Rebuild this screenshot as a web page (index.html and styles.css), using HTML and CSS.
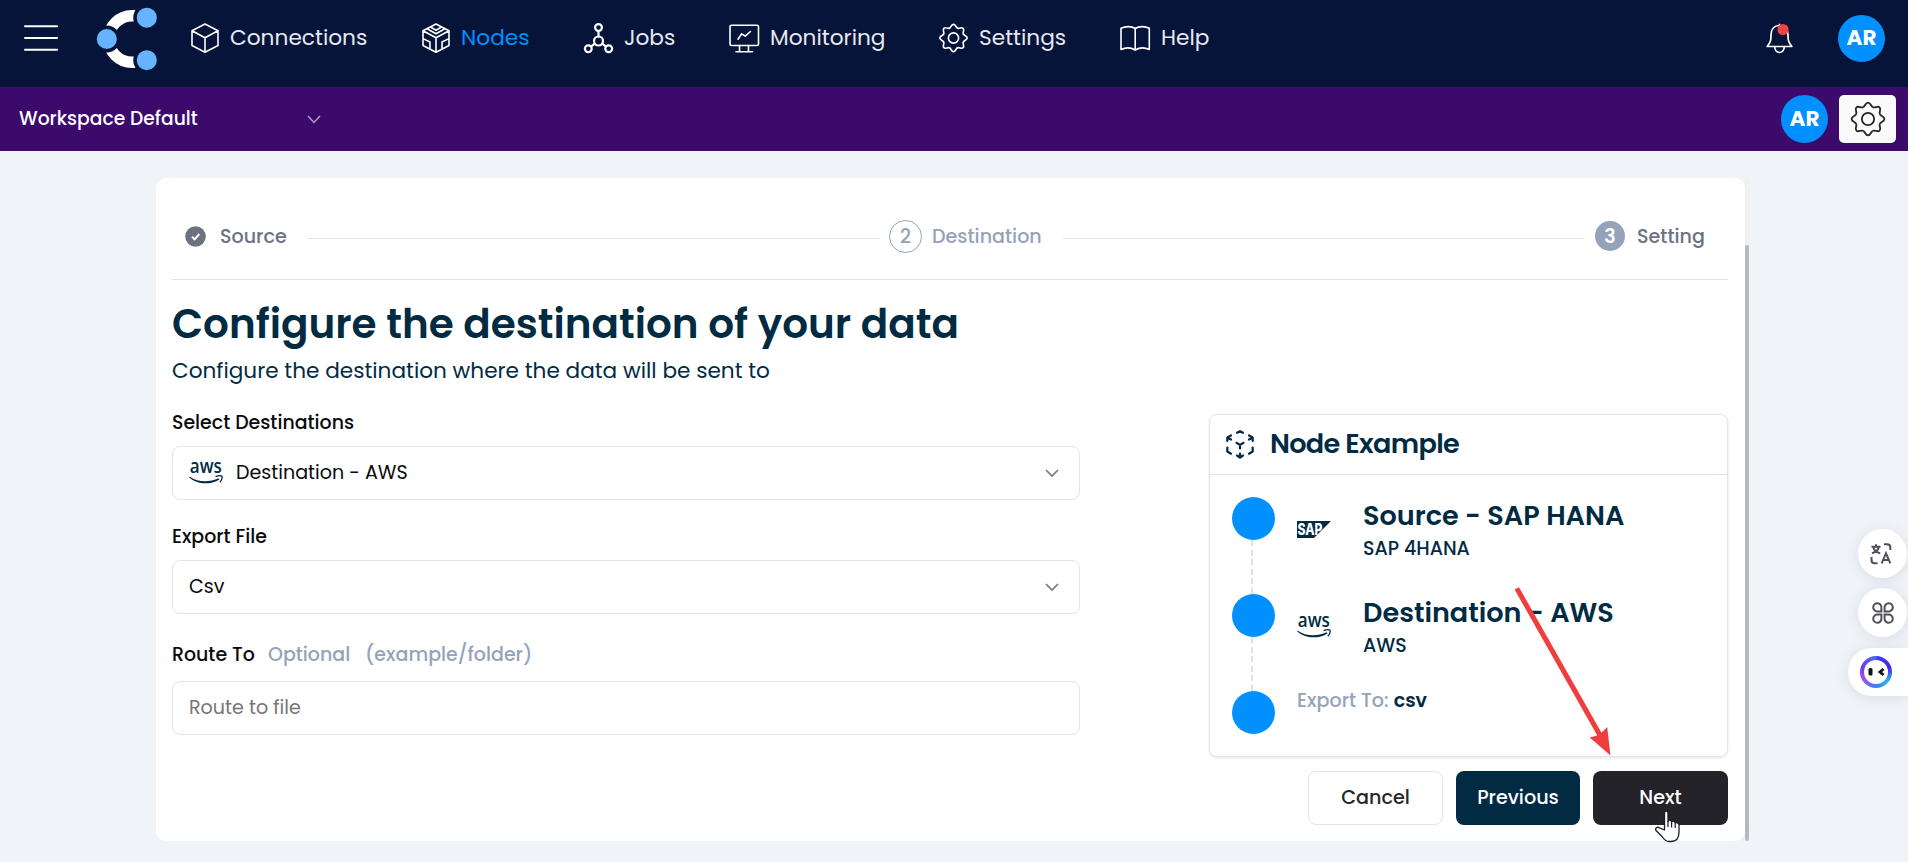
FILE: index.html
```html
<!DOCTYPE html>
<html lang="en">
<head>
<meta charset="utf-8">
<title>Nodes</title>
<link rel="stylesheet" href="styles.css">
</head>
<body>
<svg class="defs" width="0" height="0">
  <defs>
    <path id="tooth" d="M-4.78-11.55C-2.38-12.55-2.7-16 0-16S2.38-12.55 4.78-11.55"/>
    <g id="gear">
      <use href="#tooth"/><use href="#tooth" transform="rotate(45)"/><use href="#tooth" transform="rotate(90)"/><use href="#tooth" transform="rotate(135)"/><use href="#tooth" transform="rotate(180)"/><use href="#tooth" transform="rotate(225)"/><use href="#tooth" transform="rotate(270)"/><use href="#tooth" transform="rotate(315)"/>
      <circle r="6"/>
    </g>
    <symbol id="aws" viewBox="0 0 34 22">
      <text class="aws-word" x="0.8" y="10.8" textLength="32" lengthAdjust="spacingAndGlyphs">aws</text>
      <path d="M0.6 14.4C9 20.4 20 20.6 29.6 16.2L30.4 17.4C21.5 23 8 22.800 0.2 15.200Z" fill="#002b43"/>
      <path d="M26.5 14.6C29 13.6 32 13.5 33 14.2C33.4 16 32.4 18.6 30.8 20.2" fill="none" stroke="#002b43" stroke-width="1.3"/>
    </symbol>
  </defs>
</svg>

<header class="topbar">
  <svg class="burger" width="34" height="26" viewBox="0 0 34 26" stroke="#fff" stroke-width="2" stroke-linecap="round"><path d="M1 1.3H33M1 13H33M1 24.7H33"/></svg>
  <svg class="logo" width="62" height="64" viewBox="0 0 62 64">
    <path d="M39.5 8.700H36A23.300 23.300 0 0 0 36 55.300H39.500" fill="none" stroke="#fff" stroke-width="11.500"/>
    <g fill="#66b3ff" stroke="#061439" stroke-width="3.500"><circle cx="50.800" cy="10.700" r="11.800"/><circle cx="10.800" cy="32" r="11.800"/><circle cx="50.800" cy="53.200" r="11.800"/></g>
  </svg>
  <nav class="nav">
    <a class="nav-item"><svg width="28" height="30" viewBox="0 0 28 30"><path d="M14 1L27 7.700V22.500L14 29.200L1 22.500V7.700ZM1 7.700L14 14.800L27 7.700M14 14.800V29"/></svg><span>Connections</span></a>
    <a class="nav-item active"><svg width="28" height="30" viewBox="0 0 28 30"><path d="M14 1L27 7.700V22.500L14 29.200L1 22.500V7.700ZM1 7.700L14 14.800L27 7.700M14 14.800V29M8.500 4L14 7.300L19.500 4M5 5.700L14 10.800L23 5.700M1 15.600L8 19V25.800M27 15.600L20 19V25.800"/></svg><span>Nodes</span></a>
    <a class="nav-item"><svg width="29" height="30" viewBox="0 0 29 30" class="bold"><circle cx="14.500" cy="4.500" r="3.400"/><circle cx="14.500" cy="18" r="4.500"/><circle cx="4.300" cy="25.700" r="3.400"/><circle cx="24.700" cy="25.700" r="3.400"/><path d="M14.500 8V13.500M10.800 20.700L7 23.600M18.200 20.700L22 23.600"/></svg><span>Jobs</span></a>
    <a class="nav-item"><svg width="30" height="30" viewBox="0 0 30 30"><rect x="1" y="2.300" width="28.500" height="20.200" rx="1.500"/><path d="M10.500 22.500V28.500M19.500 22.500V28.500M7 28.800H23.500M9 16.200L12.700 10.800L16.200 13.200L21.500 8.500"/></svg><span>Monitoring</span></a>
    <a class="nav-item"><svg width="29" height="30" viewBox="-17 -17.600 34 35.200" class="gear-sm"><use href="#gear"/></svg><span>Settings</span></a>
    <a class="nav-item"><svg width="30" height="30" viewBox="0 0 30 30"><path d="M15.200 5.500C11.500 3 5.500 3 1 5.200V26.500C5.500 24.500 11 24.500 15.200 27C19.500 24.500 25 24.500 29.300 26.500V5.200C25 3 19 3 15.200 5.500V27"/></svg><span>Help</span></a>
  </nav>
  <div class="top-right">
    <svg class="bell" width="27" height="31" viewBox="0 0 27 31"><path d="M13.500 2.500C8 2.500 5 6.500 5 12C5 17.500 4.500 19.500 1.200 23.500H25.800C22.500 19.500 22 17.500 22 12C22 6.500 19 2.500 13.500 2.500ZM13.500 2.500V.8M8.700 23.500C8.700 31.500 18.300 31.500 18.300 23.500" fill="none" stroke="#fff" stroke-width="1.700" stroke-linejoin="round"/><circle cx="17" cy="6.500" r="5.600" fill="#ef4444"/></svg>
    <span class="avatar">AR</span>
  </div>
</header>

<div class="workspace">
  <span class="ws-name">Workspace Default</span>
  <svg width="14" height="9" viewBox="0 0 14 9"><path d="M1 1L7 7.500L13 1" fill="none" stroke="#b49dc6" stroke-width="1.500"/></svg>
  <span class="avatar">AR</span>
  <button class="gear-btn"><svg width="36" height="36" viewBox="-17.600 -17.600 35.200 35.200"><use href="#gear"/></svg></button>
</div>

<main class="panel">
  <div class="panel-body">
    <div class="steps">
      <svg width="21" height="21" viewBox="0 0 21 21"><circle cx="10.500" cy="10.500" r="10.300" fill="#6b7280"/><path d="M7 10.800L9.600 13.300L14.300 8" fill="none" stroke="#fff" stroke-width="2"/></svg>
      <span class="step-label s1">Source</span>
      <i class="step-line l1"></i>
      <span class="step-num ring">2</span>
      <span class="step-label s2">Destination</span>
      <i class="step-line l2"></i>
      <span class="step-num solid">3</span>
      <span class="step-label s3">Setting</span>
    </div>
    <h1>Configure the destination of your data</h1>
    <p class="subtitle">Configure the destination where the data will be sent to</p>
    <div class="columns">
      <form class="form">
        <label class="lbl">Select Destinations</label>
        <div class="field"><svg width="34" height="22" class="field-logo"><use href="#aws"/></svg><span>Destination - AWS</span><svg class="chevron" width="14" height="9" viewBox="0 0 14 9"><path d="M1 1L7 7L13 1"/></svg></div>
        <label class="lbl second">Export File</label>
        <div class="field"><span>Csv</span><svg class="chevron" width="14" height="9" viewBox="0 0 14 9"><path d="M1 1L7 7L13 1"/></svg></div>
        <label class="lbl third"><span class="route">Route To</span><span class="hint optional">Optional</span><span class="hint">(example/folder)</span></label>
        <div class="field placeholder"><span>Route to file</span></div>
      </form>
      <section class="example">
        <h2><svg width="28" height="29" viewBox="0 0 28 29"><path d="M11 2.800L14 1.200L17 2.800M1.300 11V7.500L5 5.500M1.300 7.500L5 9.500M23 5.500L26.700 7.500V11M26.700 7.500L23 9.500M1.300 17.500V21.500L5 23.700M26.700 17.500V21.500L23 23.700M10.500 12.800L14 14.900L17.500 12.800M14 14.900V18.500M11 25.500L14 27.700L17 25.500M14 23.500V27.700"/></svg><span>Node Example</span></h2>
        <div class="timeline">
          <div class="track"><i class="dot"></i><i class="dash"></i></div>
          <svg class="sap" width="34" height="17" viewBox="0 0 34 17"><path d="M0 0H34L17 17H0Z" fill="#002b43"/><text x="0.500" y="14.200" textLength="25" lengthAdjust="spacingAndGlyphs">SAP</text></svg>
          <div class="info"><h3>Source - SAP HANA</h3><p>SAP 4HANA</p></div>
        </div>
        <div class="timeline">
          <div class="track"><i class="dot"></i><i class="dash"></i></div>
          <svg class="aws" width="34" height="22"><use href="#aws"/></svg>
          <div class="info"><h3>Destination - AWS</h3><p>AWS</p></div>
        </div>
        <div class="timeline last">
          <div class="track"><i class="dot"></i></div>
          <p class="export"><span>Export To:</span> <b>csv</b></p>
        </div>
      </section>
    </div>
    <div class="actions">
      <button class="btn cancel">Cancel</button>
      <button class="btn previous">Previous</button>
      <button class="btn next">Next</button>
    </div>
  </div>
  <div class="scrollbar"><i class="thumb"></i></div>
</main>

<svg class="arrow" width="110" height="180" viewBox="0 0 110 180" fill="#f03e3e"><path d="M9.600 1.600L14.300-.8L101.500 153L107.500 147L111 177L89 158L97 156Z" transform="translate(-1 1) scale(.99)"/></svg>
<svg class="cursor" width="27" height="33" viewBox="0 0 27 33"><path d="M10.500 20V3.200C10.500.4 14 .4 14 3.200V11.500C14.500 9.500 17.500 9.800 17.600 12.200C18.500 10.500 21 11 21.200 13.200C22.500 12 25 12.700 25 15.200V22C25 28 22 31.500 17 31.500H15C11.500 31.500 10 29.500 8 26.500L2 20.500C.5 18 3.500 16.500 5.500 17.800Z" fill="#fff" stroke="#1b1b2b" stroke-width="1.300" stroke-linejoin="round"/><path d="M14 11V17M17.600 12V17.500M21.200 13.500V18" stroke="#1b1b2b" stroke-width="1.200"/></svg>

<aside class="floats">
  <span class="float-circle translate"><svg width="22" height="22" viewBox="0 0 22 22"><path d="M1.500 3.800H10.500M6 1.200V3.800M2 10.300C6 9 8.300 7 8.800 4M3.200 4C4.200 7.500 6.500 9.500 10.200 10.300M11.700 20.300L16 10.200L20.300 20.300M13.200 17H18.800M14 1.300H17Q20.300 1.300 20.300 4.500V7M1.500 14V17Q1.500 20.300 4.700 20.300H7.500"/></svg></span>
  <span class="float-circle"><svg width="22" height="22" viewBox="0 0 22 22"><path d="M9.400 9.400H5.500A4.100 4.100 0 1 1 9.400 5.500ZM12.600 9.400V5.500A4.100 4.100 0 1 1 16.500 9.400ZM9.400 12.600V16.500A4.100 4.100 0 1 1 5.500 12.600ZM12.600 12.600H16.500A4.100 4.100 0 1 1 12.600 16.500Z"/></svg></span>
  <span class="float-pill"><i class="bot"><svg width="24" height="22" viewBox="0 0 24 22"><rect x="4.500" y="7" width="4" height="7.500" rx="1.500" fill="#111"/><path d="M19.500 8L16 11L19.500 14" fill="none" stroke="#111" stroke-width="2.800"/></svg></i></span>
</aside>
</body>
</html>
```

FILE: styles.css
```css
* { box-sizing: border-box; }
body {
  margin: 0;
  width: 1908px;
  height: 862px;
  overflow: hidden;
  position: relative;
  background: #f0f4f9;
  font-family: Poppins, Inter, sans-serif;
  color: #002b43;
}
h1, h2, h3, p { margin: 0; }
svg { display: block; flex: none; overflow: visible; }
span, h1, p, h3, label { white-space: nowrap; }
.defs { position: absolute; }

/* Top navigation */
.topbar {
  display: flex;
  align-items: center;
  height: 87px;
  padding: 0 23px 11px 24px;
  background: #061439;
}
.logo { margin: 2px 0 0 38px; }
.nav {
  display: grid;
  grid-template-columns: 231px 162px 145px 210px 181px 120px;
  margin-left: 33px;
}
.nav-item {
  display: flex;
  align-items: center;
  gap: 11px;
  font-size: 21.7px;
  color: #e6e9ef;
}
.nav-item span { padding-bottom: 1px; }
.nav-item svg {
  fill: none;
  stroke: #fff;
  stroke-width: 1.6;
  stroke-linejoin: round;
  stroke-linecap: round;
}
.nav-item svg.bold { stroke-width: 2.2; }
.nav-item svg.gear-sm { stroke-width: 1.9; }
.nav-item.active { color: #0090ff; }
.top-right { display: flex; align-items: center; margin-left: auto; }
.bell { margin-right: 45px; }
.avatar {
  display: flex;
  align-items: center;
  justify-content: center;
  width: 47px;
  height: 47px;
  padding-bottom: 1px;
  border-radius: 50%;
  background: #0090ff;
  color: #fff;
  font-size: 21.6px;
  font-weight: 700;
}

/* Workspace bar */
.workspace {
  display: flex;
  align-items: center;
  height: 64px;
  padding: 0 12px 0 19px;
  background: #3c0a6b;
  color: #fff;
  font-size: 18.7px;
  font-weight: 500;
}
.ws-name { width: 288px; padding-bottom: 2px; }
.workspace .avatar { margin-left: auto; height: 48px; }
.gear-btn {
  display: flex;
  align-items: center;
  justify-content: center;
  width: 57px;
  height: 48px;
  margin-left: 11px;
  border: 0;
  border-radius: 5px;
  background: #fafafa;
  fill: none;
  stroke: #27272a;
  stroke-width: 1.8;
}

/* Panel */
.panel { display: flex; width: 1593px; height: 663px; margin: 27px 0 0 156px; }
.panel-body {
  flex: none;
  width: 1589px;
  padding: 0 17px 0 16px;
  border-radius: 10px;
  background: #fff;
}
.scrollbar { flex: none; width: 4px; padding-top: 67px; background: #f0f0f0; }
.thumb { display: block; height: 596px; border-radius: 2px; background: #b5babf; }

.steps {
  display: flex;
  align-items: center;
  height: 102px;
  padding: 15px 0 0 13px;
  border-bottom: 1px solid #e4e4e7;
  font-size: 19.1px;
  font-weight: 500;
}
.step-label { flex: none; color: #6b7280; }
.s1 { margin-left: 14px; width: 88px; }
.s2 { margin-left: 10px; width: 131px; color: #94a3b8; }
.s3 { margin-left: 12px; }
.step-line { flex: none; height: 1px; margin-top: 4px; background: #e4e4e7; }
.l1 { width: 571px; }
.l2 { width: 520px; }
.step-num { display: flex; flex: none; align-items: center; justify-content: center; border-radius: 50%; }
.ring { width: 33px; height: 33px; margin-left: 10px; border: 1px solid #94a3b8; color: #94a3b8; }
.solid { width: 30px; height: 30px; margin-left: 12px; background: #94a3b8; color: #fff; font-weight: 600; }

h1 { margin-top: 20px; font-size: 40.5px; line-height: 48px; font-weight: 600; }
.subtitle { margin-top: 8px; font-size: 21.6px; line-height: 30px; }

.columns { display: grid; grid-template-columns: 908px 519px; justify-content: space-between; margin-top: 24px; }
.lbl {
  display: flex;
  align-items: center;
  height: 24px;
  color: #09090b;
  font-size: 18.95px;
  font-weight: 500;
}
.second { margin-top: 24px; }
.third { margin-top: 28px; }
.route { width: 96px; }
.hint { padding-top: 1px; color: #94a3b8; font-size: 19px; }
.optional { width: 97px; }
.field {
  display: flex;
  align-items: center;
  height: 54px;
  margin-top: 12px;
  padding: 0 20px 0 16px;
  border: 1px solid #e4e4e7;
  border-radius: 8px;
  color: #09090b;
  font-size: 19.1px;
}
.field span { padding-bottom: 1px; }
.third + .field { margin-top: 15px; }
.field.placeholder { color: #757575; }
.field-logo { margin-right: 13px; }
.chevron { margin-left: auto; fill: none; stroke: #7b7b7b; stroke-width: 1.7; }
.aws-word { font: 600 20px "Open Sans", sans-serif; fill: #002b43; }

/* Node example */
.example {
  height: 343px;
  margin-top: 4px;
  border: 1px solid #e4e4e7;
  border-radius: 8px;
  box-shadow: 0 1px 3px rgba(0, 0, 0, .1);
}
.example h2 {
  display: flex;
  align-items: center;
  gap: 16px;
  height: 60px;
  padding: 0 0 1px 16px;
  border-bottom: 1px solid #dfe6f0;
  font-size: 27.1px;
  font-weight: 600;
  letter-spacing: -.025em;
}
.example h2 svg { fill: none; stroke: #002b43; stroke-width: 2.2; stroke-linecap: round; stroke-linejoin: round; stroke-dasharray: none; }
.timeline { display: flex; height: 97px; margin-left: 22px; }
.example h2 + .timeline { margin-top: 22px; }
.track { width: 43px; margin-right: 22px; }
.dot { display: block; width: 43px; height: 43px; border-radius: 50%; background: #0090ff; }
.dash {
  display: block;
  width: 2px;
  height: 54px;
  margin-left: 19px;
  background: repeating-linear-gradient(#e0e0e0 0 6px, transparent 6px 9.6px);
}
.sap { margin-top: 24px; }
.sap text { font: 800 15.8px Inter, sans-serif; fill: #fff; }
.timeline .aws { margin-top: 22px; }
.info { margin-left: 32px; padding-top: 3px; }
.info h3 { font-size: 27.1px; line-height: 32px; font-weight: 600; }
.info p { margin-top: 5px; font-size: 19px; line-height: 24px; font-weight: 500; }
.export { margin-top: -2px; font-size: 19.1px; line-height: 24px; font-weight: 500; }
.export span { color: #94a3b8; }
.export b { font-weight: 600; }

/* Buttons */
.actions { display: flex; justify-content: flex-end; gap: 13px; margin-top: 14px; }
.btn {
  width: 135px;
  height: 54px;
  padding: 0 0 1px;
  border: 0;
  border-radius: 8px;
  font: 500 19.2px Poppins, Inter, sans-serif;
  color: #fff;
}
.cancel { border: 1px solid #e4e4e7; background: #fff; color: #27272a; }
.previous { width: 124px; background: #002b43; }
.next { background: #232329; }

/* Overlays */
.arrow { position: absolute; left: 1506px; top: 587px; width: 106px; height: 172px; }
.cursor { position: absolute; left: 1654px; top: 810px; }
.floats {
  position: absolute;
  right: 0;
  top: 529px;
  display: flex;
  flex-direction: column;
  align-items: flex-end;
}
.float-circle, .float-pill {
  display: flex;
  align-items: center;
  background: #fff;
  box-shadow: 0 2px 14px rgba(60, 70, 90, .13);
}
.float-circle { justify-content: center; width: 49px; height: 49px; margin: 0 1px 10px 0; border-radius: 50%; }
.translate { padding-right: 3px; }
.float-circle svg { fill: none; stroke: #50505a; stroke-width: 2; }
.float-pill { width: 60px; height: 48px; margin-top: 1px; padding-left: 12px; border-radius: 24px 0 0 24px; }
.bot {
  display: flex;
  align-items: center;
  justify-content: center;
  width: 32px;
  height: 32px;
  border: 4px solid transparent;
  border-radius: 50%;
  background: linear-gradient(#fff, #fff) padding-box, conic-gradient(from 0deg, #4b3df5, #4424f0 20%, #27b5e8 35%, #3b82f6 50%, #b04ae0 68%, #6a3df0 80%, #4b6df5) border-box;
}
```
